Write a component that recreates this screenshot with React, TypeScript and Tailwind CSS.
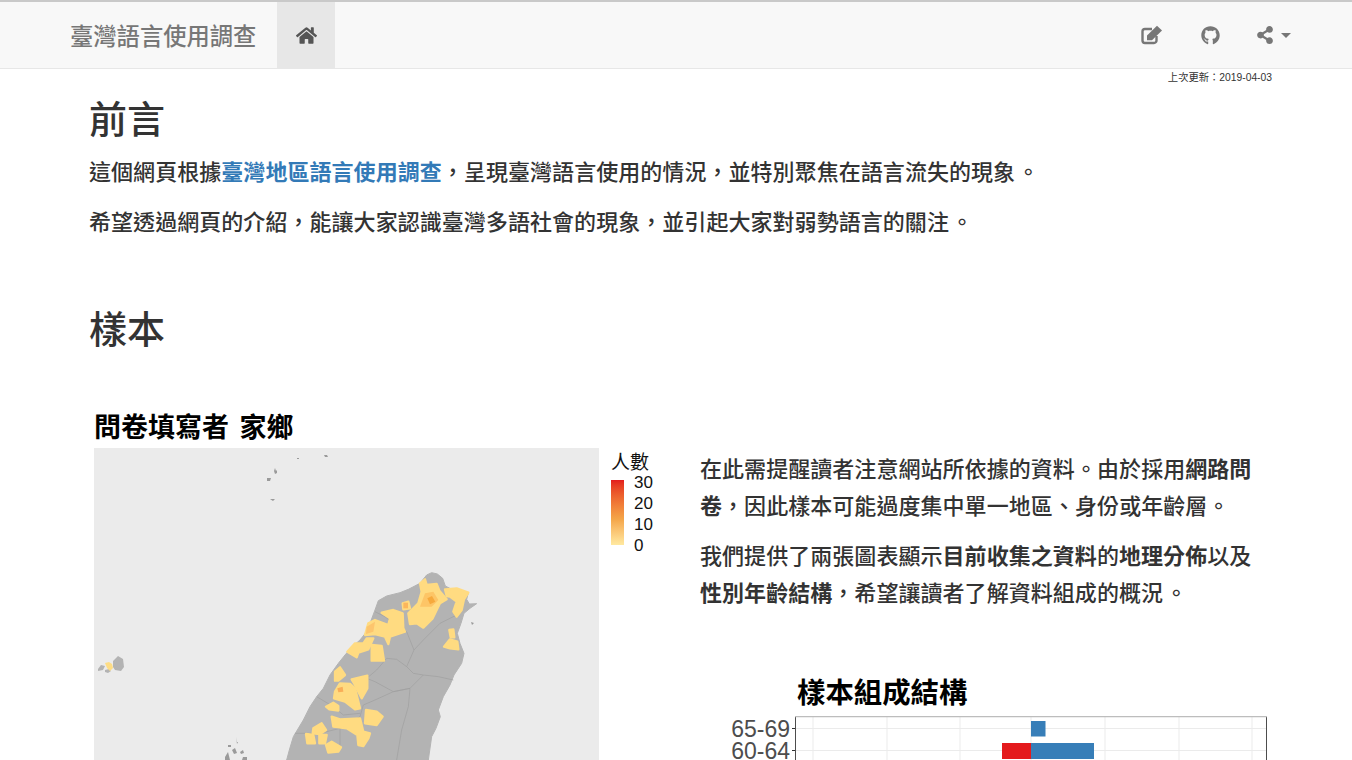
import React from 'react';
import { FaGithub, FaHome, FaShareAlt } from 'react-icons/fa';

const CJK = "font-['Liberation_Sans','Noto_Sans_CJK_TC',sans-serif]";

const TAIWAN =
  '515,38 532,42 548,55 556,78 575,88 600,90 625,98 620,118 628,132 650,131 630,145 612,160 603,190 592,220 600,250 612,280 605,310 582,345 570,375 550,410 535,450 541,470 528,505 515,530 505,600 80,600 88,570 100,530 130,480 150,440 170,410 190,385 210,345 235,310 255,285 275,262 300,240 320,215 330,190 345,150 355,122 380,108 420,98 445,88 480,70 500,45';

const COUNTIES = [
  '345,155 375,170 400,190 440,215 462,270 440,320 410,298 380,295 350,330 320,355 345,365 400,395 450,385 490,345 535,350 580,360',
  '440,320 460,340 490,345',
  '462,270 490,240 540,190 590,165',
  '450,385 400,395 345,420 310,435 300,470 240,505 240,560',
  '450,385 445,440 425,510 410,600',
  '170,410 220,440 250,465 300,460',
  '105,520 180,520 240,505',
];

const LOW_AREAS = [
  '480,70 495,58 500,75 530,72 538,92 560,118 540,130 530,150 518,175 490,203 470,190 450,192 445,160 475,130 485,95',
  '555,88 590,85 625,98 612,118 605,150 590,170 580,155 590,125 570,110 560,108',
  '568,210 580,208 583,232 572,232',
  '552,260 570,238 592,245 595,268 570,265',
  '428,130 445,125 450,145 430,148',
  '365,158 400,150 428,160 430,205 435,215 390,230 385,252 375,230 345,222 315,225 325,190 345,180 385,195 390,175',
  '262,275 285,250 310,250 320,235 340,235 325,268 295,278 290,292',
  '335,255 365,258 372,302 335,302',
  '225,335 240,322 255,345 235,362 225,362',
  '275,358 322,347 322,385 305,415 285,375',
  '240,370 270,372 285,385 300,445 285,448 255,425 222,415 225,395',
  '198,440 220,428 235,438 235,452 208,448',
  '318,450 350,455 368,470 350,495 315,490',
  '215,470 240,478 300,475 310,515 330,520 325,535 310,558 295,555 292,525 260,505 220,500',
  '160,505 185,490 198,510 180,522 158,520',
  '138,522 160,525 165,550 142,550',
  '178,525 200,525 195,550 178,550',
  '198,555 215,545 243,562 235,575 205,578',
];

const ChoroplethMap: React.FC = () => (
  <svg viewBox="94 448 505 312" className="block h-[312px] w-[505px] bg-[#ebebeb]">
    <g fill="#9a9a9a">
      <path d="M324 455l3 0 1 2-3 0zM297 458h2v1h-2zM275 468l1 3 1-1 0 3-2 1-1-3zM267 478l4 0-1 3-3 0zM270 499l5 0-2 2z" />
      <path d="M471 622l3 1-2 2zM236 737l1 5 1 0-1 2zM228 745l3 0 0 2-3 0zM232 750l3-2 2 5-3 1zM225 757l3-5 2 8-5 0zM240 752l3-2 1 3-3 1zM243 757l4 0 0 3-5 0z" />
    </g>
    <path d="M113 661l5-5 5 3 1 8-3 4-6-1-2-3zM98 669l3-4 4 1-2 4-5 1zM105 670l4-1 2 2-3 2-3-1z" fill="#b3b3b3" />
    <path d="M105 663l4-1 3 2 1 4-3 3-3-3z" fill="#fedd85" />
    <g transform="translate(260 560) scale(0.33333)">
      <polygon points={TAIWAN} fill="#b3b3b3" stroke="#b3b3b3" strokeWidth="3" strokeLinejoin="round" />
      <g fill="none" stroke="#9e9e9e" strokeWidth="2">
        {COUNTIES.map((points) => (
          <polyline key={points} points={points} />
        ))}
      </g>
      <g fill="#ffdb81" stroke="#ffdb81" strokeWidth="7" strokeLinejoin="round">
        {LOW_AREAS.map((points) => (
          <polygon key={points} points={points} />
        ))}
      </g>
      <polygon points="495,100 520,95 535,120 515,140 480,140" fill="#fdc566" />
      <polygon points="502,115 516,108 526,125 510,133" fill="#f6a93c" />
      <polygon points="430,128 444,128 444,145 430,145" fill="#fbb65c" />
      <polygon points="232,385 248,380 250,395 235,397" fill="#f9ae58" />
      <polygon points="320,200 345,185 340,215 318,222" fill="#fdc56d" />
    </g>
  </svg>
);

const Legend: React.FC = () => (
  <div className="ml-[12px] w-[60px] text-[17px] leading-[21px] text-[#111]">
    <div className="h-[27px] pt-[2px] text-[19px] leading-[26px]">人數</div>
    <div className="flex">
      <div className="mt-[5px] h-[65px] w-[13px] bg-gradient-to-b from-[#e31a1c] via-[#f4a548] via-60% to-[#ffe9a0]" />
      <div className="ml-[10px] -mt-[3px]">
        <div>30</div>
        <div>20</div>
        <div>10</div>
        <div>0</div>
      </div>
    </div>
  </div>
);

const PyramidChart: React.FC = () => (
  <svg viewBox="730 716 540 44" className="ml-[30px] block h-[44px] w-[540px]">
    <rect x="796" y="716" width="471" height="44" fill="#fff" />
    <g stroke="#ebebeb" strokeWidth="1">
      {[813, 887, 960, 1031, 1105, 1179, 1252].map((x) => (
        <line key={x} x1={x} y1="716" x2={x} y2="760" />
      ))}
      <line x1="796" y1="728.5" x2="1267" y2="728.5" />
      <line x1="796" y1="750.5" x2="1267" y2="750.5" />
    </g>
    <rect x="1031" y="721" width="14.5" height="15.5" fill="#377eb8" />
    <rect x="1002" y="743" width="29" height="16" fill="#e41a1c" />
    <rect x="1031" y="743" width="63" height="16" fill="#377eb8" />
    <path d="M795.5 760V716.5M1266.5 716.5V760" fill="none" stroke="#4d4d4d" strokeWidth="1" />
    <path d="M795 716.5H1267" stroke="#bdbdbd" strokeWidth="1.5" />
    <path d="M792 728.5h3M792 750.5h3" stroke="#333" strokeWidth="1" />
    <text x="790" y="736.5" textAnchor="end" fontSize="23" fill="#4d4d4d" fontFamily="Liberation Sans">65-69</text>
    <text x="790" y="758.5" textAnchor="end" fontSize="23" fill="#4d4d4d" fontFamily="Liberation Sans">60-64</text>
  </svg>
);

// fa-pencil-square-o: the react-icons one is too thin at this size
const EditIcon: React.FC = () => (
  <svg viewBox="0 0 22 20" className="h-[20px] w-[22px]" fill="none">
    <path d="M11 4H4A2.5 2.5 0 0 0 1.5 6.500v9A2.500 2.500 0 0 0 4 18h9a2.500 2.500 0 0 0 2.500-2.500V11" stroke="#777" strokeWidth="2.4" />
    <path d="M6 10.500 16 .8l5 4.700-10 9.700H6z" fill="#777" />
  </svg>
);

export default function App() {
  return (
    <div className={`h-[760px] w-[1352px] overflow-hidden bg-white ${CJK} text-[#333] [word-spacing:-4px]`}>
      <nav className="flex h-[69px] items-stretch border-b border-t-2 border-b-[#e7e7e7] border-t-[#c9c9c9] bg-[#f8f8f8] pl-[70px] pr-[61px] text-[#777]">
        <a className="flex items-center pt-[4px] text-[23.3px] font-medium">臺灣語言使用調查</a>
        <a className="ml-[21px] flex w-[58px] items-center justify-center bg-[#e7e7e7] text-[#555]">
          <FaHome size={21} />
        </a>
        <div className="ml-auto flex items-center">
          <EditIcon />
          <FaGithub size={19} className="ml-[38px]" />
          <FaShareAlt size={18} className="ml-[36px]" />
          <span className="ml-[7px] mt-[1px] h-0 w-0 border-x-[5px] border-t-[5px] border-x-transparent border-t-[#777]" />
        </div>
      </nav>

      <div className="pr-[80px] pt-[2px] text-right text-[10.3px] leading-[14px] text-[#333] [word-spacing:0]">上次更新：2019-04-03</div>

      <main className="pl-[89px]">
        <h1 className="mt-[8px] text-[38px] font-medium leading-[54px]">前言</h1>
        <p className="mt-[7px] text-[22px] font-medium leading-[37px] tracking-[0.05px]">
          這個網頁根據<a className="font-bold text-[#337ab7]">臺灣地區語言使用調查</a>，呈現臺灣語言使用的情況，並特別聚焦在語言流失的現象 。
        </p>
        <p className="mt-[13px] text-[22px] font-medium leading-[37px] tracking-[0.05px]">
          希望透過網頁的介紹，能讓大家認識臺灣多語社會的現象，並引起大家對弱勢語言的關注 。
        </p>
        <h1 className="mt-[62px] text-[38px] font-medium leading-[54px]">樣本</h1>

        <div className="mt-[51px] flex">
          <section className="w-[611px] shrink-0">
            <h3 className="ml-[5px] text-[27px] font-bold leading-[40px] text-black [word-spacing:3px]">問卷填寫者 家鄉</h3>
            <div className="ml-[5px] flex">
              <ChoroplethMap />
              <Legend />
            </div>
          </section>
          <section className="mt-[43px] w-[580px]">
            <p className="w-[560px] text-[22px] font-medium leading-[37px] tracking-[0.05px] [word-spacing:-6px]">
              在此需提醒讀者注意網站所依據的資料 。由於採用<b>網路問卷</b>，因此樣本可能過度集中單一地區 、身份或年齡層 。
            </p>
            <p className="mt-[13px] w-[560px] text-[22px] font-medium leading-[37px] tracking-[0.05px]">
              我們提供了兩張圖表顯示<b>目前收集之資料</b>的<b>地理分佈</b>以及<b>性別年齡結構</b>，希望讓讀者了解資料組成的概況 。
            </p>
            <h3 className="ml-[97px] mt-[59px] text-[28.4px] font-bold leading-[45px] text-black">樣本組成結構</h3>
            <PyramidChart />
          </section>
        </div>
      </main>
    </div>
  );
}
